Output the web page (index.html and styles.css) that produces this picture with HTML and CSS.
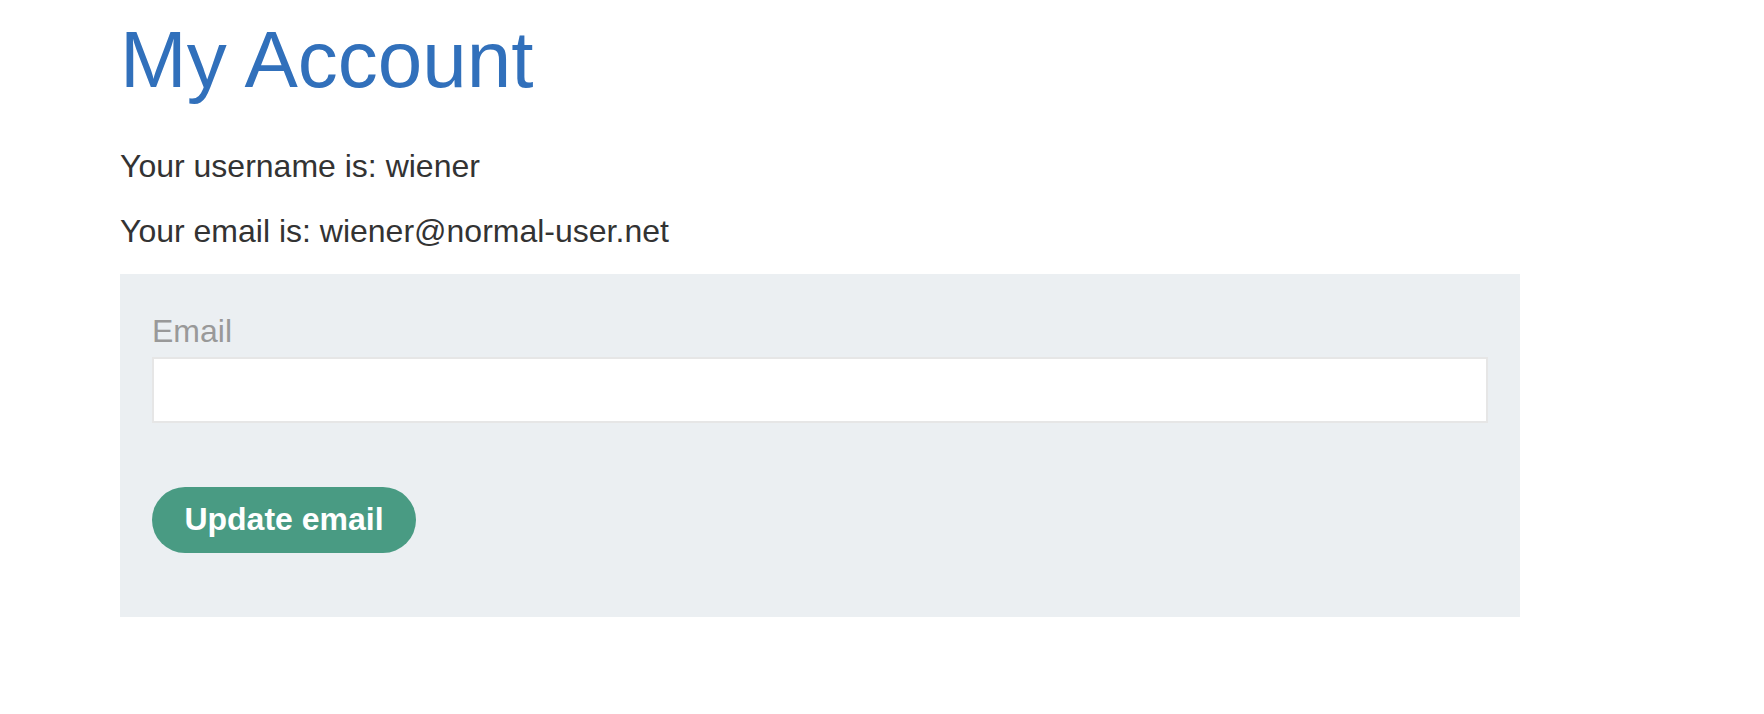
FILE: index.html
```html
<!DOCTYPE html>
<html lang="en">
<head>
<meta charset="utf-8">
<title>My Account</title>
<link rel="stylesheet" href="styles.css">
</head>
<body>
<div class="page">
  <h1 class="title">My Account</h1>
  <p class="info">Your username is: wiener</p>
  <p class="info">Your email is: wiener@normal-user.net</p>
  <form class="panel">
    <label class="label" for="email">Email</label>
    <input class="field" id="email" type="email" name="email">
    <button class="btn" type="button">Update email</button>
  </form>
</div>
</body>
</html>
```

FILE: styles.css
```css
html, body {
  margin: 0;
  padding: 0;
  background: #ffffff;
}
body {
  font-family: "Liberation Sans", Arial, Helvetica, sans-serif;
  color: #333333;
}
.page {
  padding: 16px 0 0 120px;
  width: 1400px;
}
.title {
  margin: 0 0 42px 0;
  font-size: 80px;
  line-height: 88px;
  font-weight: normal;
  color: #3170bb;
}
.info {
  margin: 0 0 25px 0;
  font-size: 32px;
  line-height: 40px;
}
.info + .info {
  margin-bottom: 23px;
}
.panel {
  display: flex;
  flex-direction: column;
  align-items: flex-start;
  background: #ebeff2;
  padding: 37px 32px 64px 32px;
}
.label {
  font-size: 32px;
  line-height: 40px;
  color: #999999;
  margin-bottom: 6px;
}
.field {
  box-sizing: border-box;
  width: 100%;
  height: 66px;
  margin: 0 0 64px 0;
  border: 2px solid #e6e6e6;
  background: #ffffff;
  font-family: inherit;
  font-size: 32px;
  padding: 0 12px;
}
.btn {
  box-sizing: border-box;
  width: 264px;
  height: 66px;
  padding: 0 0 2px 0;
  border: none;
  border-radius: 33px;
  background: #499b83;
  color: #ffffff;
  font-family: inherit;
  font-size: 32px;
  font-weight: bold;
  line-height: 64px;
  text-align: center;
}
```
